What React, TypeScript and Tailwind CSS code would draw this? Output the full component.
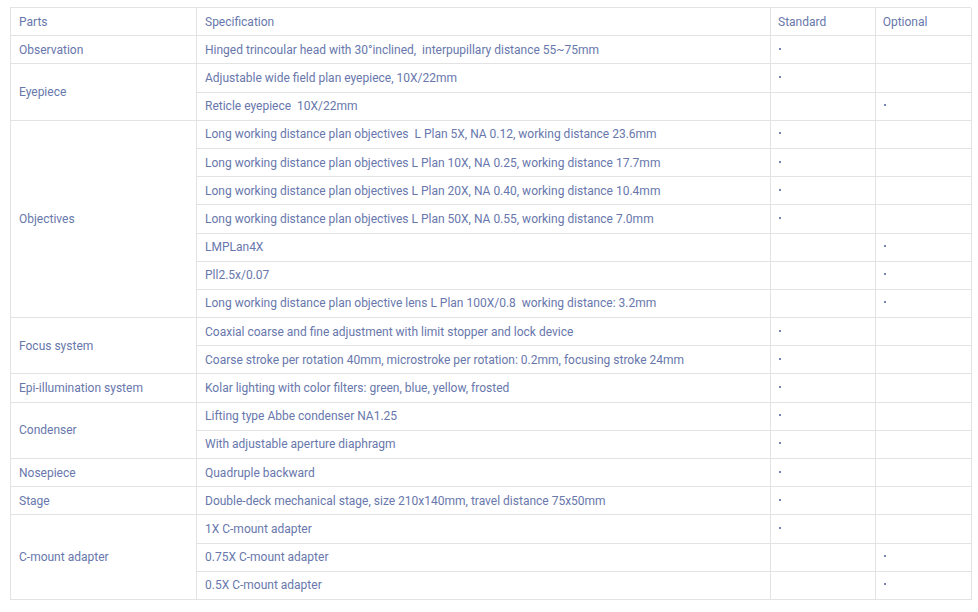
import React from "react";

type Row = { spec: string; std: boolean; opt: boolean };
type Group = { part: string; rows: Row[] };

const S = (spec: string): Row => ({ spec, std: true, opt: false });
const O = (spec: string): Row => ({ spec, std: false, opt: true });

const groups: Group[] = [
  { part: "Observation", rows: [S("Hinged trincoular head with 30°inclined,  interpupillary distance 55~75mm")] },
  { part: "Eyepiece", rows: [S("Adjustable wide field plan eyepiece, 10X/22mm"), O("Reticle eyepiece  10X/22mm")] },
  {
    part: "Objectives",
    rows: [
      S("Long working distance plan objectives  L Plan 5X, NA 0.12, working distance 23.6mm"),
      S("Long working distance plan objectives L Plan 10X, NA 0.25, working distance 17.7mm"),
      S("Long working distance plan objectives L Plan 20X, NA 0.40, working distance 10.4mm"),
      S("Long working distance plan objectives L Plan 50X, NA 0.55, working distance 7.0mm"),
      O("LMPLan4X"),
      O("Pll2.5x/0.07"),
      O("Long working distance plan objective lens L Plan 100X/0.8  working distance: 3.2mm"),
    ],
  },
  {
    part: "Focus system",
    rows: [
      S("Coaxial coarse and fine adjustment with limit stopper and lock device"),
      S("Coarse stroke per rotation 40mm, microstroke per rotation: 0.2mm, focusing stroke 24mm"),
    ],
  },
  { part: "Epi-illumination system", rows: [S("Kolar lighting with color filters: green, blue, yellow, frosted")] },
  { part: "Condenser", rows: [S("Lifting type Abbe condenser NA1.25"), S("With adjustable aperture diaphragm")] },
  { part: "Nosepiece", rows: [S("Quadruple backward")] },
  { part: "Stage", rows: [S("Double-deck mechanical stage, size 210x140mm, travel distance 75x50mm")] },
  { part: "C-mount adapter", rows: [S("1X C-mount adapter"), O("0.75X C-mount adapter"), O("0.5X C-mount adapter")] },
];

const spanClass: Record<number, string> = {
  1: "row-span-1",
  2: "row-span-2",
  3: "row-span-3",
  7: "row-span-7",
};

const base = "border-r border-b border-[#e3e3e3] pr-2 flex items-center whitespace-pre";
const cellA = `${base} pl-[8px]`;
const cellB = `${base} pl-[7px]`;

function Dot() {
  return <span className="block w-[2px] h-[2px] bg-[#7583b6] mt-[-2px] ml-[1px]" />;
}

export default function App() {
  return (
    <div className="w-[978px] h-[612px] bg-white pt-[7px] pl-[10px]" style={{ fontFamily: "Roboto, 'Liberation Sans', sans-serif" }}>
      <div className="grid grid-cols-[186px_574px_104.7px_96.3px] auto-rows-[28.19px] w-[961px] border-l border-t border-[#e3e3e3] text-[12px] text-[#6877ac]">
        <div className={cellA}>Parts</div>
        <div className={cellA}>Specification</div>
        <div className={cellB}>Standard</div>
        <div className={cellB}>Optional</div>
        {groups.map((g) => (
          <React.Fragment key={g.part}>
            <div className={`${cellA} ${spanClass[g.rows.length]}`}>{g.part}</div>
            {g.rows.map((r, i) => (
              <React.Fragment key={i}>
                <div className={cellA}>{r.spec}</div>
                <div className={cellB}>{r.std ? <Dot /> : null}</div>
                <div className={cellB}>{r.opt ? <Dot /> : null}</div>
              </React.Fragment>
            ))}
          </React.Fragment>
        ))}
      </div>
    </div>
  );
}
